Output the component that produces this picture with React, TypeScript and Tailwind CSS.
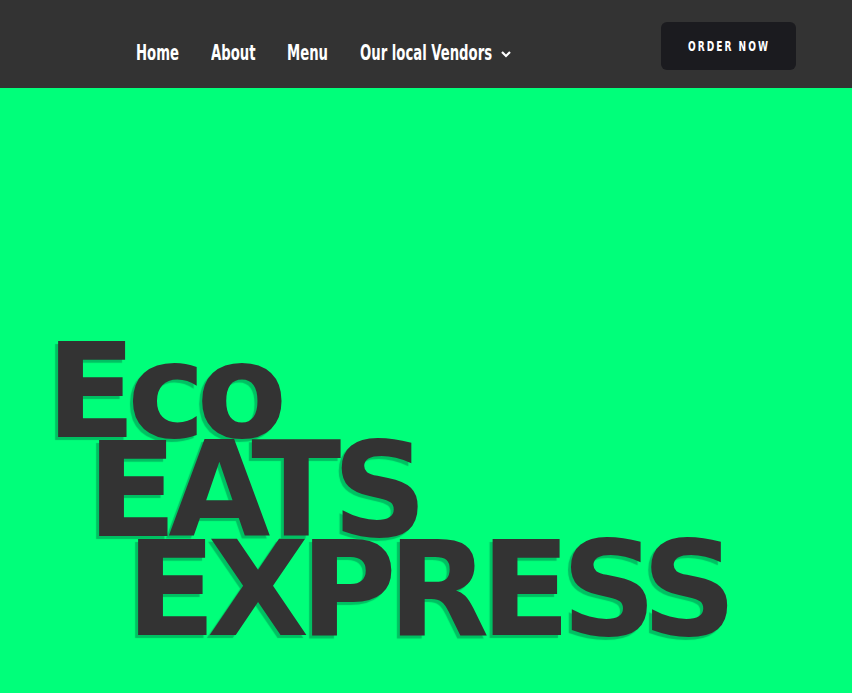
import React from "react";

const navFont = { fontFamily: '"DejaVu Sans", sans-serif', fontStretch: "condensed" as const };

function Cond({ children }: { children: React.ReactNode }) {
  return <span className="inline-block origin-left whitespace-nowrap scale-x-[0.7]">{children}</span>;
}

export default function App() {
  return (
    <div className="w-[852px] h-[693px] overflow-hidden bg-[#00ff7a]">
      <header className="h-[88px] bg-[#333333] flex items-center">
        <nav className="flex items-center ml-[136px] mt-[20px] text-white text-[21px] font-bold" style={navFont}>
          <a className="w-[75px]"><Cond>Home</Cond></a>
          <a className="w-[76px]"><Cond>About</Cond></a>
          <a className="w-[73px]"><Cond>Menu</Cond></a>
          <a className="flex items-center w-[160px]">
            <span className="w-[140px]"><Cond>Our local Vendors</Cond></span>
            <svg width="12" height="12" viewBox="0 0 12 12" fill="none" stroke="white" strokeWidth="2.2">
              <path d="M2 4l4 4 4-4" />
            </svg>
          </a>
        </nav>
        <button
          className="ml-auto mr-[56px] mt-[4px] w-[135px] h-[48px] rounded-[6px] bg-[#1b1b1f] text-white text-[14px] font-bold tracking-[0.2em] flex items-center justify-center"
          style={navFont}
        >
          <span className="inline-block scale-x-[0.72]">ORDER NOW</span>
        </button>
      </header>
      <main className="pt-[254px] pl-[46px]">
        <h1
          className="text-[#333333] font-bold text-[132px] leading-[99px] tracking-[-0.068em]"
          style={{ fontFamily: '"DejaVu Sans", sans-serif', textShadow: "-3px 3px 1px #00c062" }}
        >
          <div>Eco</div>
          <div className="pl-[41px]">EATS</div>
          <div className="pl-[80px]">EXPRESS</div>
        </h1>
      </main>
    </div>
  );
}
